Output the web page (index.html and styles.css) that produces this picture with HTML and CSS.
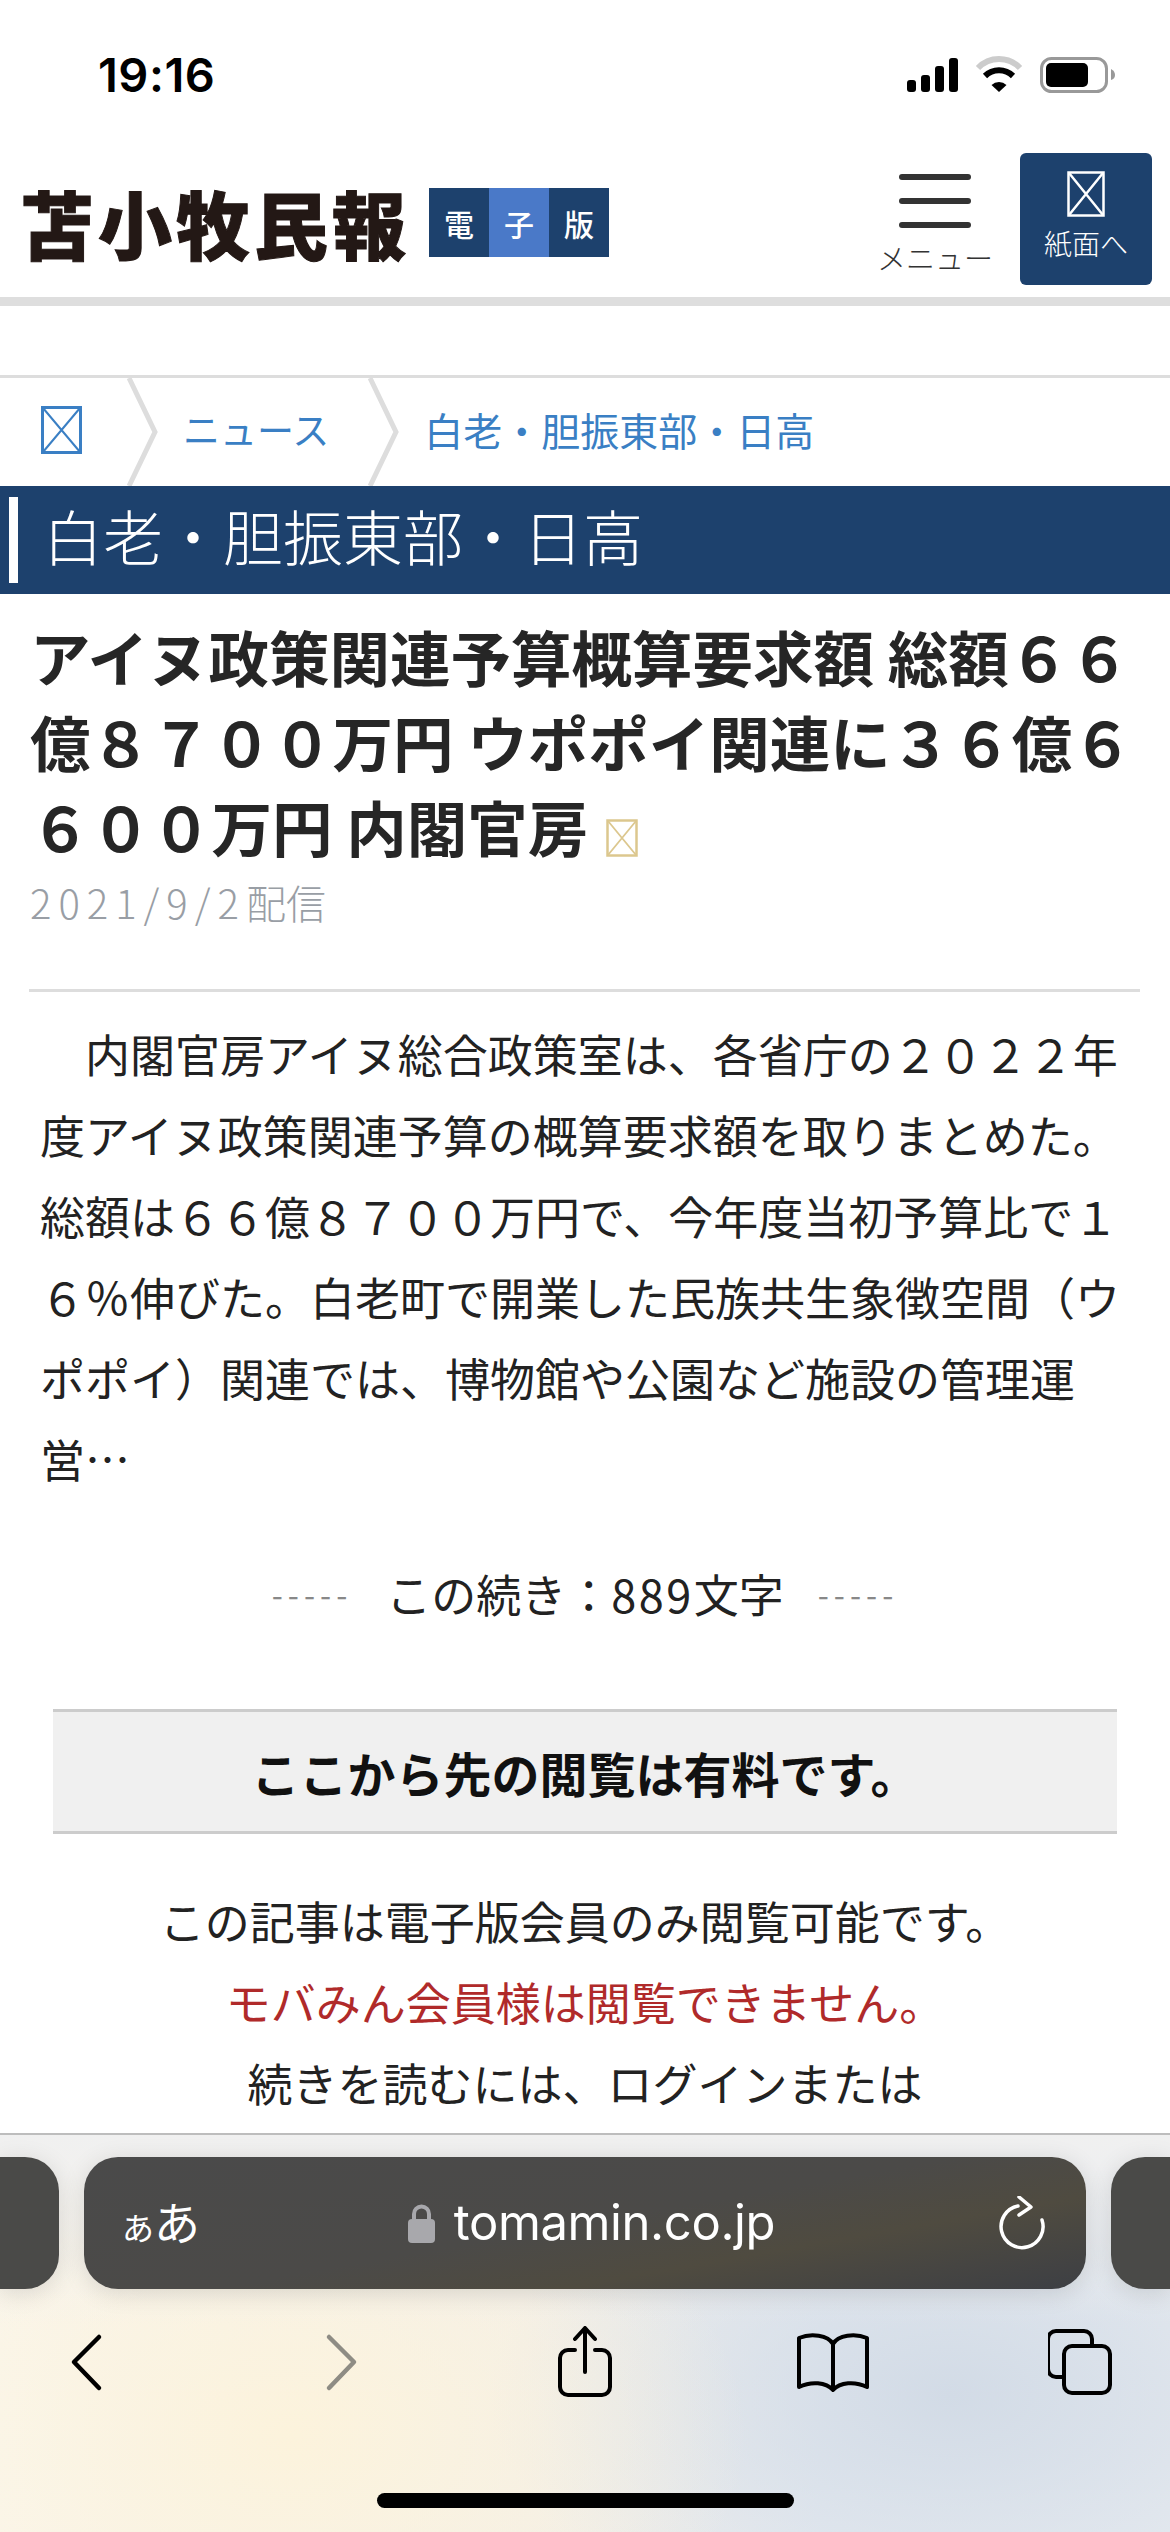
FILE: index.html
```html
<!DOCTYPE html>
<html lang="ja">
<head>
    <meta charset="UTF-8">
    <meta name="viewport" content="width=device-width, initial-scale=1.0">
    <title>アイヌ政策関連予算概算要求額 | 苫小牧民報</title>
    <link rel="stylesheet" href="styles.css">
</head>
<body>
    <div class="phone">
        <div class="statusbar">
            <span class="clock">19:16</span>
            <div class="status-icons">
                <svg class="ic-signal" width="51" height="34" viewBox="0 0 51 34">
                    <rect x="0" y="22" width="9" height="12" rx="3"/>
                    <rect x="14" y="17" width="9" height="17" rx="3"/>
                    <rect x="28" y="8" width="9" height="26" rx="3"/>
                    <rect x="42" y="0" width="9" height="34" rx="3"/>
                </svg>
                <svg class="ic-wifi" width="48" height="36" viewBox="0 0 48 36">
                    <path d="M3 12 A29 29 0 0 1 45 12" fill="none" stroke="#ccc" stroke-width="6"/>
                    <path d="M10 20 A20 20 0 0 1 38 20" fill="none" stroke="#000" stroke-width="6"/>
                    <path d="M16.5 29 A11 11 0 0 1 31.5 29 L24 36 Z"/>
                </svg>
                <svg class="ic-battery" width="75" height="36" viewBox="0 0 75 36">
                    <rect x="1.5" y="1.5" width="65" height="33" rx="10" fill="none" stroke="#999" stroke-width="3"/>
                    <rect x="6" y="6" width="42" height="24" rx="5"/>
                    <path d="M71 12 Q75 14 75 18 Q75 22 71 23 Z" fill="#999"/>
                </svg>
            </div>
        </div>

        <header class="site-header">
            <div class="logo">苫小牧民報</div>
            <div class="edition">
                <span>電</span>
                <span class="edition-mid">子</span>
                <span>版</span>
            </div>
            <div class="menu">
                <div class="menu-bars"><i></i><i></i><i></i></div>
                <div class="menu-label">メニュー</div>
            </div>
            <a class="paper-btn">
                <svg width="38" height="46" viewBox="0 0 38 46" fill="none" stroke="#fff" stroke-width="2.5">
                    <rect x="1.5" y="1.5" width="35" height="43"/>
                    <path d="M2 2 L36 44 M36 2 L2 44"/>
                </svg>
                <span>紙面へ</span>
            </a>
        </header>
        <div class="header-rule"></div>
        <div class="header-gap"></div>

        <nav class="crumbs">
            <svg class="crumb-home" width="41" height="48" viewBox="0 0 41 48" fill="none" stroke="#3a7fc4" stroke-width="3">
                <rect x="1.5" y="1.5" width="38" height="45"/>
                <path d="M2 2 L39 46 M39 2 L2 46" stroke-width="2"/>
            </svg>
            <svg class="crumb-sep" width="32" height="108" viewBox="0 0 32 108"><path d="M2 0 L28 54 L2 108"/></svg>
            <a class="crumb-link crumb-news">ニュース</a>
            <svg class="crumb-sep" width="32" height="108" viewBox="0 0 32 108"><path d="M2 0 L28 54 L2 108"/></svg>
            <a class="crumb-link crumb-area">白老・胆振東部・日高</a>
        </nav>

        <div class="section-band">
            <i class="band-mark"></i>
            <h2>白老・胆振東部・日高</h2>
        </div>

        <main class="article">
            <h1 class="article-title">アイヌ政策関連予算概算要求額 総額６６億８７００万円 ウポポイ関連に３６億６６００万円 内閣官房<svg class="title-mark" width="32" height="38" viewBox="0 0 32 38" fill="none" stroke="#dcc78e" stroke-width="2.5"><rect x="1.5" y="1.5" width="29" height="35"/><path d="M2 2 L30 36 M30 2 L2 36" stroke-width="1.8"/></svg></h1>
            <div class="article-date"><span class="date-num">2021/9/2</span>配信</div>
            <hr class="article-rule">
            <p class="article-body">　内閣官房アイヌ総合政策室は、各省庁の２０２２年度アイヌ政策関連予算の概算要求額を取りまとめた。総額は６６億８７００万円で、今年度当初予算比で１６％伸びた。白老町で開業した民族共生象徴空間（ウポポイ）関連では、博物館や公園など施設の管理運営…</p>
            <div class="more">
                <span class="more-dash">-----</span>
                <span>この続き：<span class="more-num">889</span>文字</span>
                <span class="more-dash">-----</span>
            </div>
            <div class="paywall-head">ここから先の閲覧は有料です。</div>
            <div class="paywall-text">
                <p>この記事は電子版会員のみ閲覧可能です。</p>
                <p class="warn">モバみん会員様は閲覧できません。</p>
                <p>続きを読むには、ログインまたは</p>
            </div>
        </main>

        <footer class="browser">
            <div class="tabs-row">
                <div class="tab-peek tab-peek-left"></div>
                <div class="urlbar">
                    <span class="aa"><small>あ</small>あ</span>
                    <span class="address">
                        <svg width="27" height="39" viewBox="0 0 27 39">
                            <path d="M6 17 V10 A7.5 7.5 0 0 1 21 10 V17" fill="none" stroke="#a8a8ac" stroke-width="4"/>
                            <rect x="0" y="15" width="27" height="24" rx="4" fill="#a8a8ac"/>
                        </svg>
                        <span>tomamin.co.jp</span>
                    </span>
                    <svg class="reload" width="46" height="54" viewBox="0 0 46 54" fill="none" stroke="#fff" stroke-width="3.5" stroke-linecap="round" stroke-linejoin="round">
                        <path d="M19 10 A21 21 0 1 0 43 24"/>
                        <path d="M20 1 L32 11 L20 19"/>
                    </svg>
                </div>
                <div class="tab-peek tab-peek-right"></div>
            </div>
            <div class="toolbar">
                <svg width="60" height="71" viewBox="0 0 60 71" fill="none" stroke="#000" stroke-width="4.5" stroke-linecap="round" stroke-linejoin="round">
                    <path d="M40 11 L15 36 L40 62"/>
                </svg>
                <svg width="60" height="71" viewBox="0 0 60 71" fill="none" stroke="#8e8c84" stroke-width="4.5" stroke-linecap="round" stroke-linejoin="round">
                    <path d="M22 11 L47 36 L22 62"/>
                </svg>
                <svg width="60" height="71" viewBox="0 0 60 71" fill="none" stroke="#000" stroke-width="4" stroke-linecap="round" stroke-linejoin="round">
                    <path d="M20 24 H13 A8 8 0 0 0 5 32 V61 A8 8 0 0 0 13 69 H47 A8 8 0 0 0 55 61 V32 A8 8 0 0 0 47 24 H40"/>
                    <path d="M30 46 V3 M20 13 L30 2 L40 13"/>
                </svg>
                <svg width="72" height="60" viewBox="0 0 72 60" fill="none" stroke="#000" stroke-width="4" stroke-linejoin="round">
                    <path d="M36 12 C31 3 14 1 2 6 V55 C14 49 29 50 36 58 C43 50 58 49 70 55 V6 C58 1 41 3 36 12 Z"/>
                    <path d="M36 12 V57"/>
                </svg>
                <svg width="66" height="66" viewBox="2 0 66 66" fill="none" stroke="#000" stroke-width="4" stroke-linejoin="round">
                    <path d="M16 48 H10 A8 8 0 0 1 2 40 V10 A8 8 0 0 1 10 2 H38 A8 8 0 0 1 46 10 V16"/>
                    <rect x="18" y="17" width="46" height="47" rx="8"/>
                </svg>
            </div>
            <div class="home-bar"></div>
        </footer>
    </div>
</body>
</html>
```

FILE: styles.css
```css
* { box-sizing: border-box; }
html, body { margin: 0; padding: 0; background-color: #fff; }
body { font-family: "Noto Sans CJK JP", "Noto Sans", sans-serif; color: #222; }
h1, h2, p { margin: 0; }
i { display: block; }

.phone { width: 1170px; height: 2532px; display: flex; flex-direction: column; overflow: hidden; }

/* status bar */
.statusbar { height: 150px; flex: none; display: flex; justify-content: space-between; padding: 55px 55px 0 98px; }
.clock { font-family: Inter, sans-serif; font-weight: 600; font-size: 47px; line-height: 40px; letter-spacing: .5px; color: #000; }
.status-icons { display: flex; align-items: flex-end; height: 37px; }
.ic-wifi { margin-left: 17px; }
.ic-battery { margin-left: 17px; margin-bottom: -1px; }

/* site header */
.site-header { height: 147px; flex: none; display: flex; align-items: flex-start; padding: 3px 18px 0 20px; }
.logo { margin-top: 31px; width: 389px; height: 75px; font-size: 74px; line-height: 75px; font-weight: 900; letter-spacing: 4px; white-space: nowrap; color: #231815; -webkit-text-stroke: 1px #231815; }
.edition { margin: 35px 0 0 20px; display: flex; width: 180px; height: 69px; }
.edition span { flex: 1; display: flex; align-items: center; justify-content: center; background-color: #1d416d; color: #fff; font-size: 30px; font-weight: 500; }
.edition .edition-mid { background-color: #4a79c8; }
.menu { margin-left: 269px; width: 114px; display: flex; flex-direction: column; align-items: center; padding-top: 21px; }
.menu-bars { width: 72px; display: flex; flex-direction: column; gap: 18px; }
.menu-bars i { height: 6px; border-radius: 3px; background-color: #333; }
.menu-label { margin-top: 9px; font-size: 29px; line-height: 40px; font-weight: 300; white-space: nowrap; color: #333; }
.paper-btn { margin-left: 28px; width: 132px; height: 132px; border-radius: 6px; background-color: #1d416d; color: #fff; display: flex; flex-direction: column; align-items: center; padding-top: 18px; font-size: 28px; line-height: 40px; font-weight: 300; }
.paper-btn span { margin-top: 6px; white-space: nowrap; }

.header-rule { height: 9px; flex: none; background-color: #dedede; }
.header-gap { flex: none; border-bottom: 3px solid #ddd; height: 72px; }

/* breadcrumbs */
.crumbs { height: 108px; flex: none; display: flex; align-items: center; padding-left: 41px; }
.crumb-home { margin-top: -4px; }
.crumb-sep { flex: none; }
.crumb-sep path { fill: none; stroke: #ddd; stroke-width: 5; }
.crumb-home + .crumb-sep { margin-left: 45px; }
.crumb-link { font-size: 39px; line-height: 104px; font-weight: 400; color: #3a7fc4; white-space: nowrap; margin-top: -6px; }
.crumb-news { margin: -6px 39px 0 24px; font-size: 37px; }
.crumb-area { margin-left: 24px; }

/* section title band */
.section-band { height: 108px; flex: none; display: flex; align-items: center; padding-left: 9px; background-color: #1d416d; }
.band-mark { width: 9px; height: 86px; background-color: #fff; }
.section-band h2 { margin: -11px 0 0 25px; font-size: 60px; line-height: 86px; font-weight: 300; color: #fff; }

/* article */
.article { flex: 1; min-height: 0; overflow: hidden; padding-top: 19px; }
.article-title { padding: 0 30px; font-size: 60.5px; line-height: 85px; font-weight: 700; color: #262626; }
.title-mark { margin-left: 18px; vertical-align: -5px; }
.article-date { padding-left: 30px; margin-top: 4px; font-size: 40px; line-height: 60px; font-weight: 300; color: #999ea5; }
.date-num { letter-spacing: 7px; }
.article-rule { margin: 57px 30px 0 29px; border: 0; height: 3px; background-color: #ddd; }
.article-body { margin: 21px 50px 0 40px; font-size: 45px; line-height: 81px; font-weight: 400; color: #222; }
.more { margin-top: 54px; display: flex; justify-content: center; align-items: center; gap: 34px; font-size: 45px; line-height: 81px; font-weight: 400; }
.more-num { letter-spacing: 2.5px; }
.more-dash { color: #888; font-size: 32px; letter-spacing: 5px; }
.paywall-head { margin: 75px 53px 0; height: 125px; display: flex; align-items: center; justify-content: center; border-top: 3px solid #ccc; border-bottom: 3px solid #ccc; background-color: #f0f0f0; font-size: 48px; font-weight: 700; color: #111; }
.paywall-text { margin-top: 46px; text-align: center; font-size: 45px; line-height: 81px; font-weight: 400; }
.paywall-text .warn { color: #b02a2a; }

/* browser chrome */
.browser { height: 399px; flex: none; border-top: 2px solid #bdbdbd; padding-top: 22px;
    background:
        linear-gradient(#f0f0f0 0, rgba(240, 240, 240, 0) 190px),
        radial-gradient(460px 300px at 290px 300px, #fcf3dc 0, rgba(252, 243, 220, 0) 100%),
        radial-gradient(460px 260px at 950px 260px, #d2dbe6 0, rgba(210, 219, 230, 0) 100%),
        linear-gradient(90deg, #faf6ec 0, #f3efe8 45%, #e6ebf1 70%, #e8ecf1 100%);
}
.tabs-row { height: 132px; display: flex; gap: 25px; }
.tab-peek { width: 59px; background-color: #4a4a48; box-shadow: 0 4px 24px rgba(0, 0, 0, .12); }
.tab-peek-left { border-radius: 0 34px 34px 0; }
.tab-peek-right { border-radius: 34px 0 0 34px; }
.urlbar { width: 1002px; display: flex; align-items: center; justify-content: space-between; padding: 0 41px 0 38px; border-radius: 34px; color: #fff;
    background: linear-gradient(170deg, #4a4a4a 0, #4b4a48 50%, #4f4b40 70%, #3d3f44 100%);
    box-shadow: 0 4px 24px rgba(0, 0, 0, .12); }
.aa { font-size: 46px; line-height: 60px; font-weight: 400; white-space: nowrap; width: 76px; }
.aa small { font-size: 32px; }
.address { display: flex; align-items: center; gap: 19px; margin-right: 14px; font-family: Inter, sans-serif; font-size: 49px; line-height: 60px; font-weight: 400; letter-spacing: -.4px; }
.toolbar { margin-top: 37px; height: 71px; display: grid; grid-template-columns: repeat(5, 248px); justify-content: center; justify-items: center; align-items: center; }
.home-bar { margin: 96px auto 0; width: 417px; height: 15px; border-radius: 8px; background-color: #000; }
```
